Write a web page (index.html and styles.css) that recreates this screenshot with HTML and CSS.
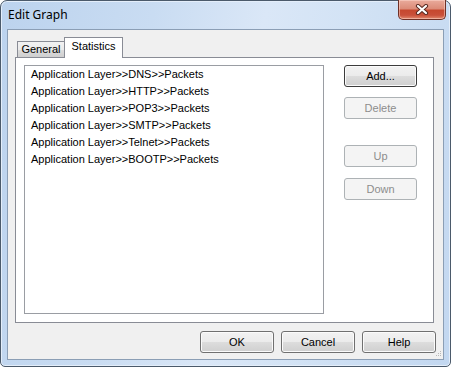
FILE: index.html
```html
<!DOCTYPE html>
<html lang="en">
<head>
  <meta charset="UTF-8" />
  <title>Edit Graph</title>
  <link rel="stylesheet" href="styles.css">
</head>
<body>
  <div class="window">
    <div class="titlebar">
      <span class="title">Edit Graph</span>
      <button class="close" type="button">
        <svg width="14" height="11" viewBox="0 0 14 11">
          <path d="M3 2 L11 9 M11 2 L3 9" stroke="#5a2a22" stroke-width="4.2" stroke-linecap="round" fill="none"/>
          <path d="M3 2 L11 9 M11 2 L3 9" stroke="#ffffff" stroke-width="2.2" stroke-linecap="round" fill="none"/>
        </svg>
      </button>
    </div>

    <div class="client">
      <div class="tabs">
        <div class="tab">General</div>
        <div class="tab active">Statistics</div>
      </div>

      <div class="panel">
        <ul class="list">
          <li>Application Layer&gt;&gt;DNS&gt;&gt;Packets</li>
          <li>Application Layer&gt;&gt;HTTP&gt;&gt;Packets</li>
          <li>Application Layer&gt;&gt;POP3&gt;&gt;Packets</li>
          <li>Application Layer&gt;&gt;SMTP&gt;&gt;Packets</li>
          <li>Application Layer&gt;&gt;Telnet&gt;&gt;Packets</li>
          <li>Application Layer&gt;&gt;BOOTP&gt;&gt;Packets</li>
        </ul>
        <div class="side">
          <button class="btn default" type="button">Add...</button>
          <button class="btn btn-delete" type="button" disabled>Delete</button>
          <button class="btn btn-up" type="button" disabled>Up</button>
          <button class="btn btn-down" type="button" disabled>Down</button>
        </div>
      </div>

      <div class="footer">
        <button class="btn" type="button">OK</button>
        <button class="btn" type="button">Cancel</button>
        <button class="btn" type="button">Help</button>
      </div>

      <svg class="grip" width="7" height="7" viewBox="0 0 7 7">
        <rect x="5" y="0" width="1" height="1" fill="#b8b8b8"/>
        <rect x="3" y="2" width="1" height="1" fill="#b8b8b8"/>
        <rect x="5" y="2" width="1" height="1" fill="#b8b8b8"/>
        <rect x="1" y="4" width="1" height="1" fill="#b8b8b8"/>
        <rect x="3" y="4" width="1" height="1" fill="#b8b8b8"/>
        <rect x="5" y="4" width="1" height="1" fill="#b8b8b8"/>
      </svg>
    </div>
  </div>
</body>
</html>
```

FILE: styles.css
```css
* {
  box-sizing: border-box;
}
body {
  margin: 0;
  background: #ffffff;
  font-family: "Liberation Sans", Arial, sans-serif;
  font-size: 11px;
  color: #000000;
}
.window {
  width: 451px;
  height: 367px;
  border: 1px solid #4b5a6b;
  border-radius: 7px 7px 5px 5px;
  padding: 0 6px 6px 6px;
  display: flex;
  flex-direction: column;
  background: linear-gradient(100deg, #bcd3ee 0%, #c9dcf2 30%, #dae7f7 52%, #d3e3f5 68%, #c2d7f0 100%);
  box-shadow: inset 0 0 0 1px #e4eefa;
}
.titlebar {
  height: 28px;
  display: flex;
  align-items: flex-start;
}
.title {
  font-family: "Noto Sans", "Open Sans", sans-serif;
  font-size: 12px;
  line-height: 14px;
  margin-top: 7px;
  margin-left: 1px;
  color: #000000;
}
.close {
  margin-left: auto;
  margin-right: -2px;
  margin-top: -1px;
  width: 48px;
  height: 20px;
  padding: 0;
  border: 1px solid #6e3026;
  border-top: none;
  border-radius: 0 0 5px 5px;
  background: linear-gradient(#e9ab9c 0%, #dc8c79 45%, #c6482f 55%, #c9503a 80%, #e2896e 100%);
  box-shadow: inset 0 0 0 1px rgba(255, 220, 210, 0.5);
  display: flex;
  align-items: center;
  justify-content: center;
}
.client {
  position: relative;
  flex: 1;
  border: 1px solid #8b9eb5;
  background: #f0f0f0;
  padding: 7px 0 6px 7px;
  display: flex;
  flex-direction: column;
}
.tabs {
  display: flex;
  align-items: flex-end;
  height: 20px;
  padding-left: 2px;
}
.tab {
  height: 16px;
  width: 48px;
  border: 1px solid #898c95;
  border-bottom: none;
  background: linear-gradient(#f2f2f2 0%, #ebebeb 50%, #dddddd 51%, #cfcfcf 100%);
  text-align: center;
  line-height: 15px;
}
.tab.active {
  position: relative;
  z-index: 1;
  height: 21px;
  width: 59px;
  margin-left: -1px;
  margin-bottom: -1px;
  background: #ffffff;
  line-height: 16px;
}
.panel {
  width: 419px;
  height: 266px;
  border: 1px solid #898c95;
  background: #ffffff;
  padding: 7px 0 0 8px;
  display: flex;
}
.list {
  list-style: none;
  margin: 0;
  padding: 0 0 0 6px;
  width: 300px;
  height: 249px;
  border: 1px solid #9a9da3;
  background: #ffffff;
}
.list li {
  height: 17px;
  line-height: 17px;
  white-space: nowrap;
}
.side {
  display: flex;
  flex-direction: column;
  margin-left: 20px;
}
.btn {
  width: 73px;
  height: 22px;
  padding: 0;
  font-family: "Liberation Sans", Arial, sans-serif;
  font-size: 11px;
  color: #000000;
  border: 1px solid #707070;
  border-radius: 3px;
  background: linear-gradient(#f2f2f2 0%, #ebebeb 50%, #dddddd 51%, #cfcfcf 100%);
  box-shadow: inset 0 0 0 1px #fbfbfb;
}
.btn.default {
  border-color: #3c3c3c;
}
.btn:disabled {
  color: #8d8d8d;
  border-color: #adb2b5;
  background: #f4f4f4;
  box-shadow: none;
}
.btn-delete {
  margin-top: 10px;
}
.btn-up {
  margin-top: 26px;
}
.btn-down {
  margin-top: 11px;
}
.footer {
  display: flex;
  justify-content: flex-end;
  gap: 7px;
  margin-top: 8px;
  padding-right: 7px;
}
.footer .btn {
  width: 74px;
}
.grip {
  position: absolute;
  right: 1px;
  bottom: 1px;
}
```
